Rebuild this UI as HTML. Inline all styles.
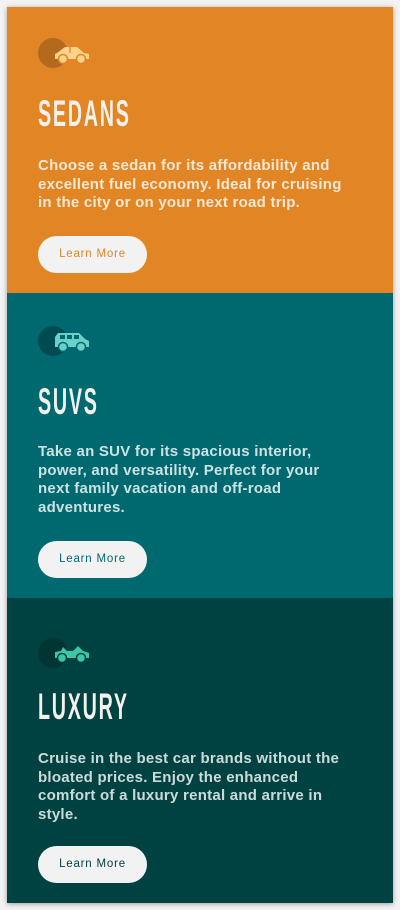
<!DOCTYPE html>
<html><head><meta charset="utf-8"><style>
*{margin:0;padding:0;box-sizing:border-box}
html,body{width:400px;height:910px;background:#f3f3f3;overflow:hidden}
.card{position:absolute;left:7px;top:7px;width:386px;height:896px;box-shadow:0 1px 5px rgba(0,0,0,.35)}
.sec{position:absolute;left:0;width:386px}
.s1{top:0;height:286px;background:#e28625}
.s2{top:286px;height:305px;background:#006970}
.s3{top:591px;height:305px;background:#004241}
.ic{position:absolute;left:31px;width:30px;height:30px;border-radius:50%}
.car{position:absolute;left:46px;width:38px;height:20px}
h2{position:absolute;left:31px;font-family:"Liberation Sans",sans-serif;font-weight:bold;font-size:34px;color:#f4f1ec;letter-spacing:3px;transform:scale(0.58,1.1);transform-origin:left top;line-height:34px;white-space:nowrap}
p{position:absolute;left:31px;font-family:"Liberation Sans",sans-serif;font-size:15px;line-height:18.5px;color:rgba(255,255,255,.8);letter-spacing:.25px;white-space:nowrap;font-weight:bold}
.btn{position:absolute;left:31px;width:109px;height:37px;border-radius:19px;background:#f2f2f2;font-family:"Liberation Sans",sans-serif;font-size:11.5px;letter-spacing:.8px;text-align:center;line-height:37px}
</style></head><body>
<div class="card">
<div class="sec s1">
 <div class="ic" style="top:31px;background:#b36a1e"></div>
 <svg class="car" style="top:37px" viewBox="0 0 38 20"><path fill="#fcd38a" d="M4 9 L12 3 L24 3 L31 9 L36 10 L36 15 L2 15 L2 10Z"/><circle cx="10" cy="15" r="4.5" fill="#fcd38a" stroke="#e28625" stroke-width="1.5"/><circle cx="28" cy="15" r="4.5" fill="#fcd38a" stroke="#e28625" stroke-width="1.5"/><path d="M17 3 L17 9" stroke="#e28625" stroke-width="1.3"/></svg>
 <h2 style="top:88px">SEDANS</h2>
 <p style="top:150px">Choose a sedan for its affordability and<br>excellent fuel economy. Ideal for cruising<br>in the city or on your next road trip.</p>
 <div class="btn" style="top:229px;color:#e28625">Learn More</div>
</div>
<div class="sec s2">
 <div class="ic" style="top:33px;background:#004b52"></div>
 <svg class="car" style="top:39px" viewBox="0 0 38 20"><path fill="#6dd0c8" d="M2 5 L5 1 L26 1 L32 7 L36 9 L36 15 L2 15Z"/><rect x="7" y="3" width="5" height="4" fill="#006970"/><rect x="14" y="3" width="5" height="4" fill="#006970"/><rect x="21" y="3" width="5" height="4" fill="#006970"/><circle cx="10" cy="15" r="4.5" fill="#6dd0c8" stroke="#006970" stroke-width="1.5"/><circle cx="28" cy="15" r="4.5" fill="#6dd0c8" stroke="#006970" stroke-width="1.5"/></svg>
 <h2 style="top:90px">SUVS</h2>
 <p style="top:150px">Take an SUV for its spacious interior,<br>power, and versatility. Perfect for your<br>next family vacation and off-road<br>adventures.</p>
 <div class="btn" style="top:248px;color:#006970">Learn More</div>
</div>
<div class="sec s3">
 <div class="ic" style="top:40px;background:#003533"></div>
 <svg class="car" style="top:45px" viewBox="0 0 38 20"><path fill="#3cc7a7" d="M2 9 L8 8 L10 4 L14 8 L20 8 L25 3 L30 8 L36 10 L36 15 L2 15Z"/><circle cx="9" cy="15" r="4.5" fill="#3cc7a7" stroke="#004241" stroke-width="1.5"/><circle cx="28" cy="15" r="4.5" fill="#3cc7a7" stroke="#004241" stroke-width="1.5"/></svg>
 <h2 style="top:90px">LUXURY</h2>
 <p style="top:152px">Cruise in the best car brands without the<br>bloated prices. Enjoy the enhanced<br>comfort of a luxury rental and arrive in<br>style.</p>
 <div class="btn" style="top:248px;color:#004241">Learn More</div>
</div>
</div>
</body></html>
